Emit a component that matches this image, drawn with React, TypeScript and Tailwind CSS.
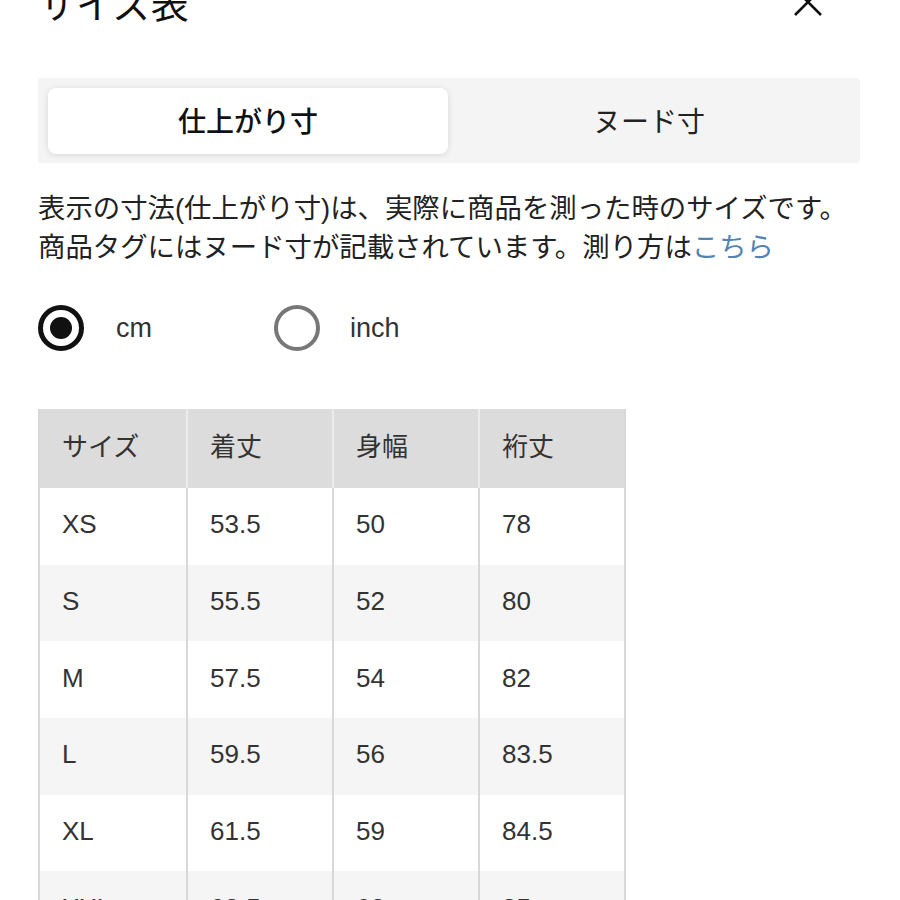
const rows = [
  { size: "XS", length: "53.5", width: "50", sleeve: "78" },
  { size: "S", length: "55.5", width: "52", sleeve: "80" },
  { size: "M", length: "57.5", width: "54", sleeve: "82" },
  { size: "L", length: "59.5", width: "56", sleeve: "83.5" },
  { size: "XL", length: "61.5", width: "59", sleeve: "84.5" },
  { size: "XXL", length: "63.5", width: "62", sleeve: "85" },
];

const headers = ["サイズ", "着丈", "身幅", "裄丈"];

export default function App() {
  return (
    <div className="w-[900px] h-[900px] overflow-hidden bg-white font-['Liberation_Sans','Noto_Sans_CJK_JP',sans-serif] text-[#222]">
      {/* Title bar */}
      <div className="flex items-start justify-between pl-[38px] pr-[76px] mt-[-13px]">
        <h2 className="text-[38px] leading-[36px] text-[#111]">サイズ表</h2>
        <svg width="32" height="32" viewBox="0 0 32 32" className="mt-[-1px]">
          <path d="M3 3 L29 29 M29 3 L3 29" stroke="#111" strokeWidth="2.6" fill="none" />
        </svg>
      </div>

      <div className="px-[38px]">
        {/* Tabs */}
        <div className="mt-[55px] w-[822px] h-[85px] bg-[#f4f4f4] rounded-[3px] p-[10px] flex">
          <button className="w-[400px] h-[66px] pt-[3px] bg-white rounded-[8px] shadow-[0_1px_6px_rgba(0,0,0,0.12)] text-[28px] font-medium text-[#111]">
            仕上がり寸
          </button>
          <button className="flex-1 h-[66px] pt-[3px] text-[28px] text-[#222]">ヌード寸</button>
        </div>

        {/* Description */}
        <p className="mt-[26px] text-[27.4px] leading-[39px] text-[#222] whitespace-nowrap">
          表示の寸法(仕上がり寸)は、実際に商品を測った時のサイズです。
          <br />
          商品タグにはヌード寸が記載されています。測り方は
          <span className="text-[#5283b4]">こちら</span>
        </p>

        {/* Unit radios */}
        <div className="mt-[38px] flex items-center">
          <label className="w-[236px] flex items-center gap-[32px]">
            <span className="w-[46px] h-[46px] rounded-full border-[5px] border-[#111] flex items-center justify-center">
              <span className="w-[22px] h-[22px] rounded-full bg-[#111]" />
            </span>
            <span className="text-[27px] text-[#333]">cm</span>
          </label>
          <label className="flex items-center gap-[30px]">
            <span className="w-[46px] h-[46px] rounded-full border-[4px] border-[#777]" />
            <span className="text-[27px] text-[#333]">inch</span>
          </label>
        </div>

        {/* Size table */}
        <div className="mt-[58px] w-[588px] border-x-2 border-[#d8d8d8]">
          <div className="grid grid-cols-4 h-[79px] bg-[#dcdcdc]">
            {headers.map((h, i) => (
              <div
                key={h}
                className={`flex items-center pl-[22px] pb-[2px] text-[26px] text-[#333] ${i > 0 ? "border-l-2 border-[#ececec]" : ""}`}
              >
                {h}
              </div>
            ))}
          </div>
          {rows.map((r, idx) => (
            <div
              key={r.size}
              className={`grid grid-cols-4 h-[76.7px] ${idx % 2 === 1 ? "bg-[#f5f5f5]" : "bg-white"}`}
            >
              {[r.size, r.length, r.width, r.sleeve].map((v, i) => (
                <div
                  key={i}
                  className={`flex items-center pl-[22px] pb-[3px] text-[26px] text-[#333] ${i > 0 ? "border-l-2 border-[#d8d8d8]" : ""}`}
                >
                  {v}
                </div>
              ))}
            </div>
          ))}
        </div>
      </div>
    </div>
  );
}
